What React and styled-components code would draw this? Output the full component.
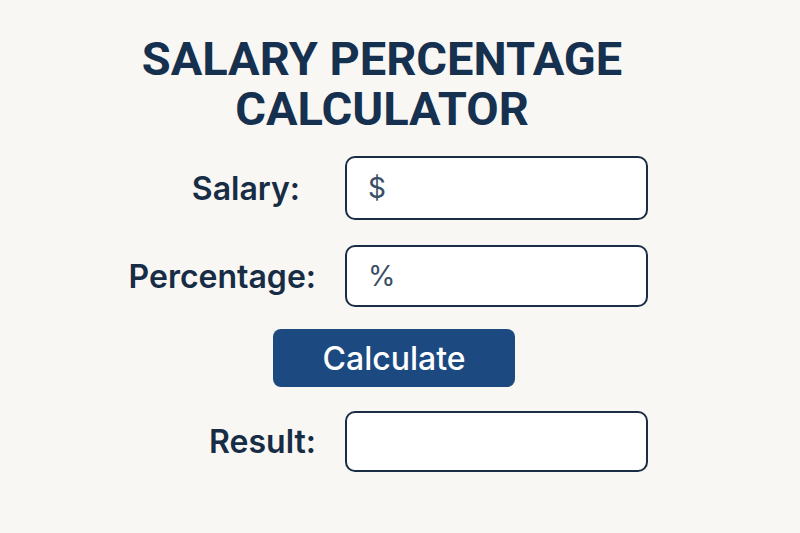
import React, { useState } from 'react';
import styled, { createGlobalStyle } from 'styled-components';

const GlobalStyle = createGlobalStyle`
  html, body {
    margin: 0;
    padding: 0;
    background: #f9f7f3;
  }
  body {
    font-family: Inter, "Noto Sans", sans-serif;
    color: #172c45;
  }
`;

const Page = styled.div`
  width: 800px;
  height: 533px;
  box-sizing: border-box;
  padding: 34px 0 0 116px;
`;

const Column = styled.div`
  width: 532px;
  display: flex;
  flex-direction: column;
`;

const Title = styled.h1`
  margin: 0 0 22px;
  text-align: center;
  font-family: Roboto, Inter, sans-serif;
  font-size: 47px;
  line-height: 50px;
  font-weight: 700;
  letter-spacing: 0;
  color: #16304f;
  text-transform: uppercase;
`;

const Row = styled.div`
  display: grid;
  grid-template-columns: 200px 303px;
  column-gap: 29px;
  align-items: center;
  margin-bottom: ${p => p.$gap}px;
`;

const Label = styled.label`
  text-align: right;
  font-size: 32px;
  font-weight: 600;
  color: #172c45;
  padding-right: ${p => p.$pad || 0}px;
`;

const Field = styled.div`
  height: ${p => p.$h}px;
  box-sizing: border-box;
  border: 2px solid #1b2d44;
  border-radius: 10px;
  background: #ffffff;
  display: flex;
  align-items: center;
  padding-left: 21px;
  font-size: 28px;
  color: #3a4e66;
`;

const ButtonRow = styled.div`
  display: flex;
  justify-content: center;
  padding-left: 24px;
  margin-bottom: 24px;
`;

const Button = styled.button`
  width: 242px;
  height: 58px;
  border: none;
  border-radius: 8px;
  background: #1c4a80;
  color: #ffffff;
  font-family: Inter, "Noto Sans", sans-serif;
  font-size: 32px;
  font-weight: 500;
  cursor: pointer;
`;

const App = () => {
  const [result] = useState('');

  return (
    <>
      <GlobalStyle />
      <Page>
        <Column>
          <Title>
            Salary Percentage
            <br />
            Calculator
          </Title>
          <Row $gap={25}>
            <Label $pad={16}>Salary:</Label>
            <Field $h={64}>$</Field>
          </Row>
          <Row $gap={22}>
            <Label>Percentage:</Label>
            <Field $h={62}>%</Field>
          </Row>
          <ButtonRow>
            <Button>Calculate</Button>
          </ButtonRow>
          <Row $gap={0}>
            <Label>Result:</Label>
            <Field $h={61}>{result}</Field>
          </Row>
        </Column>
      </Page>
    </>
  );
};

export default App;
